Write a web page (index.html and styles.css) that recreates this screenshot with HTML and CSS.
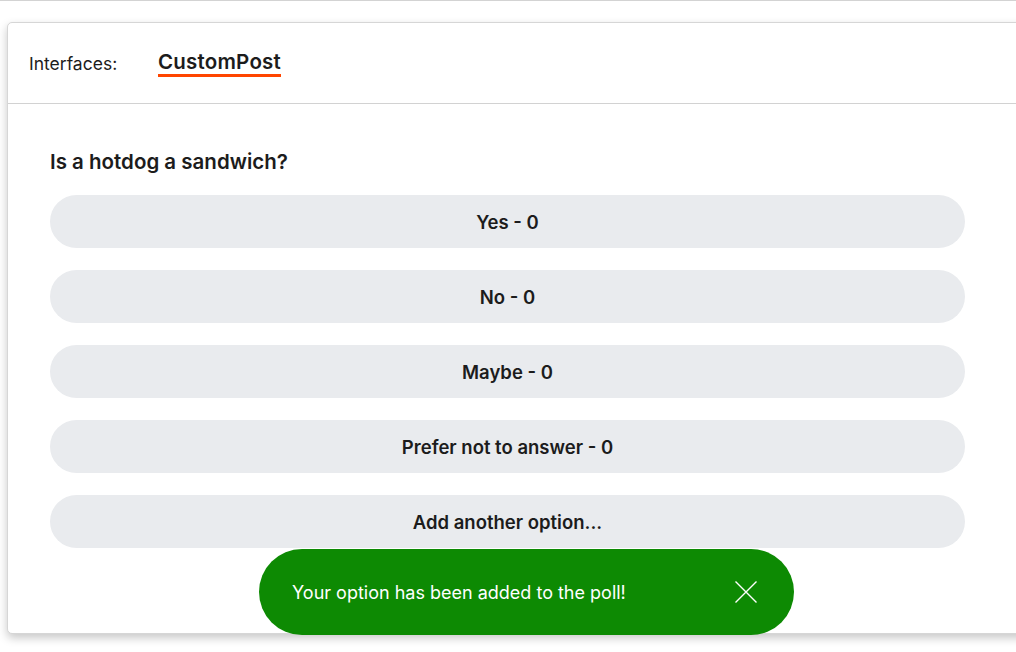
FILE: index.html
```html
<!DOCTYPE html>
<html>
<head>
<meta charset="utf-8">
<link rel="stylesheet" href="styles.css">
</head>
<body>
<div class="page">
  <div class="card">
    <div class="header">
      <span class="label">Interfaces:</span>
      <span class="tab">CustomPost</span>
    </div>
    <div class="body">
      <h2 class="question">Is a hotdog a sandwich?</h2>
      <div class="options">
        <button class="option">Yes - 0</button>
        <button class="option">No - 0</button>
        <button class="option">Maybe - 0</button>
        <button class="option">Prefer not to answer - 0</button>
        <button class="option">Add another option...</button>
      </div>
    </div>
    <div class="toast">
      <span class="toast-text">Your option has been added to the poll!</span>
      <svg class="toast-close" width="24" height="24" viewBox="0 0 24 24"><path d="M1.5 1.5 L22.5 22.5 M22.5 1.5 L1.5 22.5" stroke="#fff" stroke-width="1.4" fill="none"/></svg>
    </div>
  </div>
</div>
</body>
</html>
```
FILE: styles.css
```css
* { box-sizing: border-box; }
html, body { margin: 0; padding: 0; background: #fff; overflow: hidden; }
body {
  font-family: Inter, "Noto Sans", sans-serif;
  color: #1c1c1c;
  width: 1016px;
  height: 652px;
  border-top: 1px solid #d3d3d3;
}
.page { padding: 21px 0 0 7px; }
.card {
  position: relative;
  width: 1060px;
  height: 612px;
  background: #fff;
  border: 1px solid #d6d6d6;
  border-radius: 5px;
  box-shadow: 0 4px 10px rgba(0,0,0,0.22);
}
.header {
  display: flex;
  align-items: center;
  height: 81px;
  padding: 0 0 0 21px;
  border-bottom: 1px solid #d2d2d2;
}
.label { font-size: 17.5px; width: 129px; }
.tab {
  font-size: 20.5px;
  font-weight: 600;
  border-bottom: 3px solid #ff4500;
  line-height: 22px;
  padding-bottom: 1px;
  margin-top: 2px;
  letter-spacing: 0.01em;
}
.body { padding: 42px 0 0 42px; width: 957px; }
.question {
  margin: 0 0 17px;
  font-size: 20.5px;
  font-weight: 600;
  line-height: 32px;
}
.options { display: flex; flex-direction: column; gap: 22px; }
.option {
  height: 53px;
  border: none;
  border-radius: 27px;
  background: #e9ebee;
  font-family: inherit;
  font-size: 18.5px;
  font-weight: 600;
  color: #1c1c1c;
  padding-bottom: 1px;
}
.toast {
  position: absolute;
  left: 251px;
  bottom: -2px;
  width: 535px;
  height: 86px;
  border-radius: 43px;
  background: #0d8a03;
  display: flex;
  align-items: center;
  justify-content: space-between;
  padding: 0 36px 0 33px;
  color: #fff;
}
.toast-text { font-size: 18px; }
.toast-close { display: block; }
```
